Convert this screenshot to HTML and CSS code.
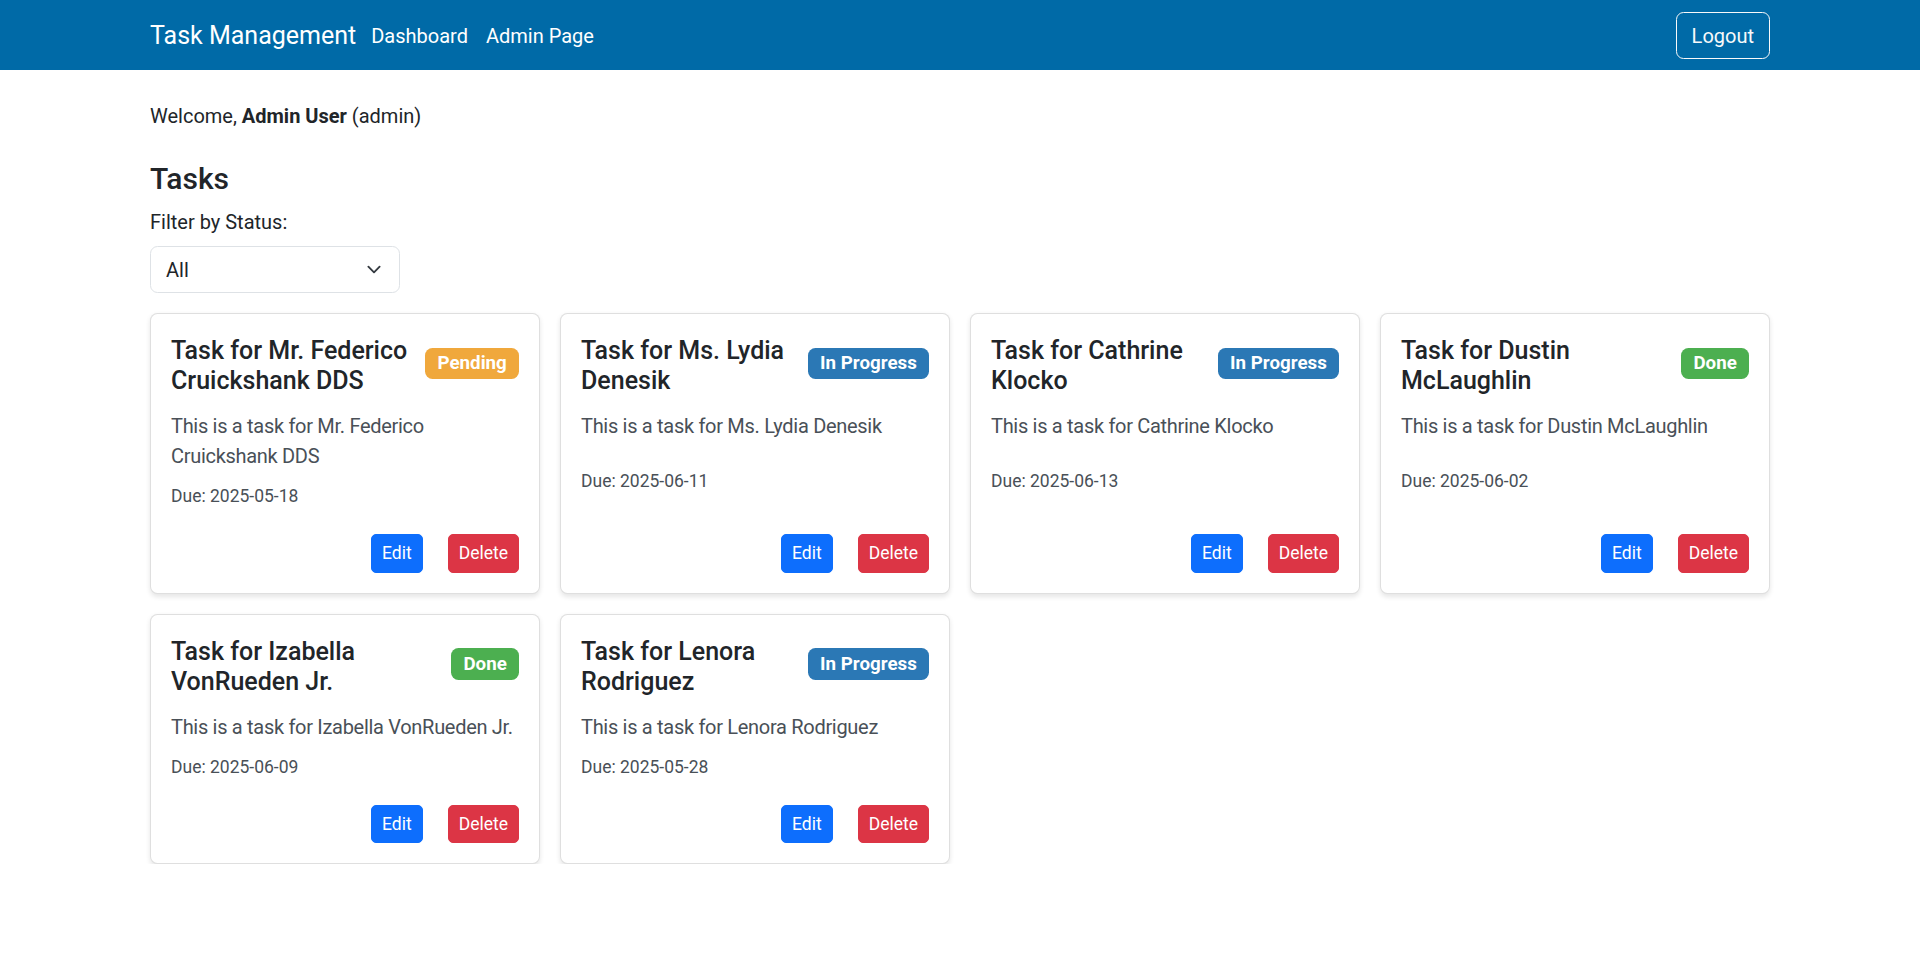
FILE: index.html
```html
<!DOCTYPE html>
<html lang="en">
<head>
<meta charset="utf-8">
<title>Task Management</title>
<link rel="stylesheet" href="styles.css">
</head>
<body>
<nav class="navbar">
  <div class="container nav-inner">
    <div class="nav-left">
      <a class="brand" href="#">Task Management</a>
      <ul class="nav-links">
        <li><a class="nav-link" href="#">Dashboard</a></li>
        <li><a class="nav-link" href="#">Admin Page</a></li>
      </ul>
    </div>
    <button class="btn-logout">Logout</button>
  </div>
</nav>

<main class="container main">
  <p class="welcome">Welcome, <strong>Admin User</strong> (admin)</p>
  <h4 class="section-title">Tasks</h4>
  <label class="form-label" for="status">Filter by Status:</label>
  <div class="select-wrap">
    <select id="status" class="form-select">
      <option>All</option>
      <option>Pending</option>
      <option>In Progress</option>
      <option>Done</option>
    </select>
  </div>

  <div class="task-grid">
    <div class="card">
      <div class="card-head">
        <h5 class="card-title">Task for Mr. Federico Cruickshank DDS</h5>
        <span class="badge badge-pending">Pending</span>
      </div>
      <p class="card-text">This is a task for Mr. Federico Cruickshank DDS</p>
      <p class="due">Due: 2025-05-18</p>
      <div class="actions"><button class="btn btn-edit">Edit</button><button class="btn btn-delete">Delete</button></div>
    </div>
    <div class="card">
      <div class="card-head">
        <h5 class="card-title">Task for Ms. Lydia Denesik</h5>
        <span class="badge badge-progress">In Progress</span>
      </div>
      <p class="card-text">This is a task for Ms. Lydia Denesik</p>
      <p class="due">Due: 2025-06-11</p>
      <div class="actions"><button class="btn btn-edit">Edit</button><button class="btn btn-delete">Delete</button></div>
    </div>
    <div class="card">
      <div class="card-head">
        <h5 class="card-title">Task for Cathrine Klocko</h5>
        <span class="badge badge-progress">In Progress</span>
      </div>
      <p class="card-text">This is a task for Cathrine Klocko</p>
      <p class="due">Due: 2025-06-13</p>
      <div class="actions"><button class="btn btn-edit">Edit</button><button class="btn btn-delete">Delete</button></div>
    </div>
    <div class="card">
      <div class="card-head">
        <h5 class="card-title">Task for Dustin McLaughlin</h5>
        <span class="badge badge-done">Done</span>
      </div>
      <p class="card-text">This is a task for Dustin McLaughlin</p>
      <p class="due">Due: 2025-06-02</p>
      <div class="actions"><button class="btn btn-edit">Edit</button><button class="btn btn-delete">Delete</button></div>
    </div>
    <div class="card">
      <div class="card-head">
        <h5 class="card-title">Task for Izabella VonRueden Jr.</h5>
        <span class="badge badge-done">Done</span>
      </div>
      <p class="card-text">This is a task for Izabella VonRueden Jr.</p>
      <p class="due">Due: 2025-06-09</p>
      <div class="actions"><button class="btn btn-edit">Edit</button><button class="btn btn-delete">Delete</button></div>
    </div>
    <div class="card">
      <div class="card-head">
        <h5 class="card-title">Task for Lenora Rodriguez</h5>
        <span class="badge badge-progress">In Progress</span>
      </div>
      <p class="card-text">This is a task for Lenora Rodriguez</p>
      <p class="due">Due: 2025-05-28</p>
      <div class="actions"><button class="btn btn-edit">Edit</button><button class="btn btn-delete">Delete</button></div>
    </div>
  </div>
</main>
</body>
</html>
```

FILE: styles.css
```css
* { box-sizing: border-box; }

html { font-size: 20px; }

body {
  margin: 0;
  font-family: Roboto, "Noto Sans", "Liberation Sans", sans-serif;
  font-size: 20px;
  line-height: 1.5;
  color: #212529;
  background: #fff;
}

.container {
  max-width: 1650px;
  margin: 0 auto;
  padding: 0 15px;
}

/* Navbar */
.navbar {
  background: #006aa7;
  padding: 10px 0;
}
.nav-inner {
  display: flex;
  align-items: center;
  justify-content: space-between;
}
.nav-left {
  display: flex;
  align-items: center;
}
.brand {
  color: #fff;
  text-decoration: none;
  font-size: 25px;
  line-height: 37.5px;
  padding: 7px 0 5.5px;
  margin-right: 6px;
}
.nav-links {
  display: flex;
  list-style: none;
  margin: 0;
  padding: 0;
}
.nav-link {
  display: block;
  color: #fff;
  text-decoration: none;
  font-size: 20px;
  padding: 11px 9px 9px;
}
.btn-logout {
  font-family: inherit;
  font-size: 20px;
  line-height: 30px;
  padding: 8px 15px 7px;
  color: #f8f9fa;
  background: transparent;
  border: 1px solid #f8f9fa;
  border-radius: 7.5px;
}

/* Main */
.main {
  padding-top: 31px;
}
.welcome {
  margin: 0 0 30px;
}
.section-title {
  font-size: 30px;
  font-weight: 500;
  line-height: 36px;
  margin: 0 0 10px;
}
.form-label {
  display: inline-block;
  margin-bottom: 9px;
}
.select-wrap {
  margin-bottom: 20px;
}
.form-select {
  display: block;
  width: 250px;
  font-family: inherit;
  font-size: 20px;
  line-height: 30px;
  color: #212529;
  padding: 7.5px 45px 7.5px 15px;
  border: 1px solid #dee2e6;
  border-radius: 7.5px;
  background-color: #fff;
  appearance: none;
  -webkit-appearance: none;
  background-image: url("data:image/svg+xml,%3csvg xmlns='http://www.w3.org/2000/svg' viewBox='0 0 16 16'%3e%3cpath fill='none' stroke='%23343a40' stroke-linecap='round' stroke-linejoin='round' stroke-width='2' d='m2 5 6 6 6-6'/%3e%3c/svg%3e");
  background-repeat: no-repeat;
  background-position: right 15px center;
  background-size: 20px 15px;
}

/* Cards */
.task-grid {
  display: grid;
  grid-template-columns: repeat(4, 1fr);
  gap: 20px;
}
.card {
  display: flex;
  flex-direction: column;
  background: #fff;
  border: 1px solid rgba(0, 0, 0, 0.125);
  border-radius: 7.5px;
  box-shadow: 0 2.5px 5px rgba(0, 0, 0, 0.1);
  padding: 20px;
}
.card-head {
  display: flex;
  align-items: center;
  justify-content: space-between;
  gap: 10px;
  margin-bottom: 15px;
}
.card-title {
  margin: 0;
  padding-top: 2px;
  font-size: 25px;
  font-weight: 500;
  line-height: 30px;
  color: #212529;
}
.badge {
  flex: none;
  display: inline-block;
  font-size: 18.75px;
  font-weight: 700;
  line-height: 1;
  color: #fff;
  padding: 6.5px 12.2px;
  margin-bottom: 3px;
  border-radius: 7.5px;
  white-space: nowrap;
}
.badge-pending { background: #f0a83c; }
.badge-progress { background: #2b78b5; }
.badge-done { background: #4caf50; }

.card-text {
  margin: 0;
  color: #495057;
  line-height: 30px;
  letter-spacing: -0.3px;
}
.due {
  margin: auto 0 0;
  padding-top: 12px;
  font-size: 17.5px;
  line-height: 26.25px;
  color: #495057;
}
.actions {
  margin-top: auto;
  padding-top: 25px;
  display: flex;
  justify-content: flex-end;
  gap: 25px;
}
.btn {
  font-family: inherit;
  font-size: 17.5px;
  line-height: 26.25px;
  padding: 5px 10px;
  border: 1px solid transparent;
  border-radius: 5px;
  color: #fff;
}
.btn-edit { background: #0d6efd; border-color: #0d6efd; }
.btn-delete { background: #dc3545; border-color: #dc3545; }
```
